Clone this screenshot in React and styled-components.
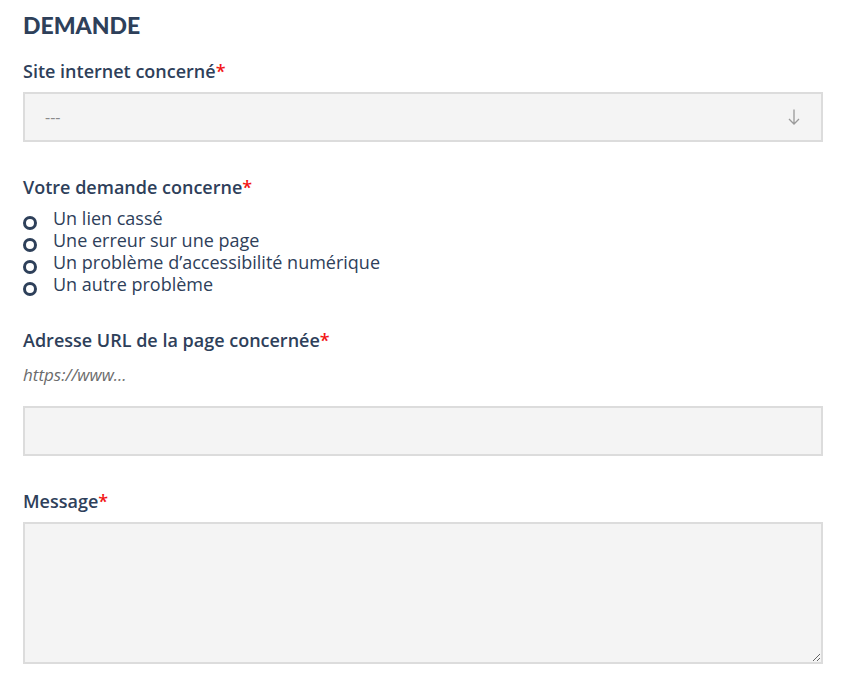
import styled, { createGlobalStyle } from "styled-components";

const GlobalStyle = createGlobalStyle`
  body {
    margin: 0;
    background: #ffffff;
    font-family: "Open Sans", "Liberation Sans", sans-serif;
    color: #2e405a;
  }
  * {
    box-sizing: border-box;
  }
`;

const options = [
  "Un lien cassé",
  "Une erreur sur une page",
  "Un problème d’accessibilité numérique",
  "Un autre problème",
];

export default function App() {
  return (
    <>
      <GlobalStyle />
      <Form>
        <Title>DEMANDE</Title>

        <Field>
          <Label>
            Site internet concerné<Required>*</Required>
          </Label>
          <SelectBox>
            <SelectValue>---</SelectValue>
            <svg width="12" height="16" viewBox="0 0 12 16">
              <path
                d="M6 0.5 V15 M1 10 L6 15 L11 10"
                fill="none"
                stroke="#9a9a9a"
                strokeWidth="1.3"
              />
            </svg>
          </SelectBox>
        </Field>

        <Field>
          <Label>
            Votre demande concerne<Required>*</Required>
          </Label>
          <RadioList>
            {options.map((o) => (
              <RadioRow key={o}>
                <RadioCircle />
                {o}
              </RadioRow>
            ))}
          </RadioList>
        </Field>

        <Field>
          <Label>
            Adresse URL de la page concernée<Required>*</Required>
          </Label>
          <Help>https://www...</Help>
          <TextInput type="text" />
        </Field>

        <Field>
          <Label>
            Message<Required>*</Required>
          </Label>
          <TextArea />
        </Field>
      </Form>
    </>
  );
}

const Form = styled.form`
  width: 800px;
  margin-left: 23px;
  padding-top: 11px;
  display: flex;
  flex-direction: column;
  gap: 33px;
`;

const Title = styled.h2`
  margin: 0 0 -13px;
  font-family: Lato, "Open Sans", sans-serif;
  font-weight: 900;
  font-size: 23px;
  line-height: 28px;
  color: #2e405a;
`;

const Field = styled.div`
  display: flex;
  flex-direction: column;
`;

const Label = styled.label`
  font-size: 18px;
  font-weight: 600;
  line-height: 24px;
  margin-bottom: 9px;
`;

const Required = styled.span`
  color: #f21616;
`;

const SelectBox = styled.div`
  height: 50px;
  display: flex;
  align-items: center;
  justify-content: space-between;
  padding: 0 21px 0 20px;
  background: #f4f4f4;
  border: 2px solid #dcdcdc;
`;

const SelectValue = styled.span`
  font-size: 16px;
  color: #8a8a8a;
`;

const RadioList = styled.div`
  display: flex;
  flex-direction: column;
  margin-top: -1px;
`;

const RadioRow = styled.div`
  display: flex;
  align-items: flex-start;
  gap: 16px;
  height: 22px;
  font-size: 18px;
  line-height: 22px;
`;

const RadioCircle = styled.span`
  flex: none;
  width: 14px;
  height: 14px;
  margin-top: 9px;
  border: 3px solid #2e405a;
  border-radius: 50%;
`;

const Help = styled.p`
  margin: 2px 0 19px;
  font-size: 17px;
  line-height: 24px;
  font-style: italic;
  color: #6b6b6b;
`;

const TextInput = styled.input`
  height: 50px;
  width: 100%;
  background: #f4f4f4;
  border: 2px solid #dcdcdc;
  outline: none;
`;

const TextArea = styled.textarea`
  height: 142px;
  width: 100%;
  background: #f4f4f4;
  border: 2px solid #dcdcdc;
  outline: none;
`;
